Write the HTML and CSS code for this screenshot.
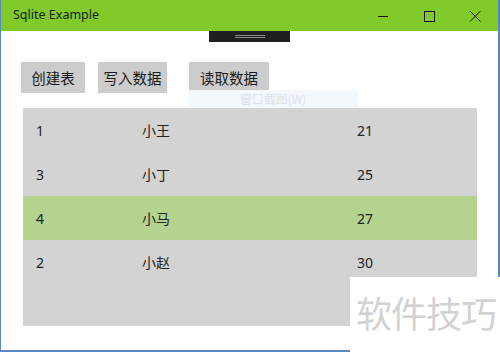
FILE: index.html
```html
<!DOCTYPE html>
<html>
<head>
<meta charset="utf-8">
<link rel="stylesheet" href="styles.css">
</head>
<body>
<div class="window">
  <div class="titlebar">
    <span class="title">Sqlite Example</span>
    <div class="controls">
      <svg class="ctl" width="46" height="31" viewBox="0 0 46 31"><line x1="18" y1="16.5" x2="28" y2="16.5" stroke="#111" stroke-width="1"/></svg>
      <svg class="ctl" width="46" height="31" viewBox="0 0 46 31"><rect x="18.5" y="11.5" width="10" height="10" fill="none" stroke="#111" stroke-width="1"/></svg>
      <svg class="ctl" width="46" height="31" viewBox="0 0 46 31"><path d="M18 11 L28.5 21.5 M28.5 11 L18 21.5" stroke="#111" stroke-width="1"/></svg>
    </div>
  </div>
  <div class="content">
    <div class="grip"><span class="grip-line"></span><span class="grip-line"></span></div>
    <div class="toolbar">
      <button class="btn btn-create">创建表</button>
      <button class="btn btn-write">写入数据</button>
      <button class="btn btn-read">读取数据</button>
    </div>
    <div class="grid">
      <div class="row"><span class="c1">1</span><span class="c2">小王</span><span class="c3">21</span></div>
      <div class="row"><span class="c1">3</span><span class="c2">小丁</span><span class="c3">25</span></div>
      <div class="row selected"><span class="c1">4</span><span class="c2">小马</span><span class="c3">27</span></div>
      <div class="row"><span class="c1">2</span><span class="c2">小赵</span><span class="c3">30</span></div>
    </div>
    <div class="tooltip">窗口截图(W)</div>
  </div>
  <div class="watermark">软件技巧</div>
</div>
</body>
</html>
```
FILE: styles.css
```css
html, body {
  margin: 0;
  padding: 0;
  background: #ffffff;
}
body {
  width: 500px;
  height: 352px;
  overflow: hidden;
  font-family: "Noto Sans", "Noto Sans CJK SC", sans-serif;
}
.window {
  position: relative;
  width: 500px;
  height: 352px;
  box-sizing: border-box;
  border-left: 1px solid #5b87c0;
  border-right: 2px solid #5b87c0;
  border-bottom: 2px solid #5b87c0;
  display: flex;
  flex-direction: column;
  background: #fff;
}
.titlebar {
  height: 31px;
  background: #80cb2a;
  display: flex;
  align-items: center;
  justify-content: space-between;
  flex: none;
}
.title {
  margin-left: 12px;
  font-size: 12.5px;
  color: #1a1a1a;
  padding-bottom: 2px;
}
.controls {
  display: flex;
}
.ctl {
  display: block;
}
.content {
  position: relative;
  flex: 1;
  display: flex;
  flex-direction: column;
}
.grip {
  width: 81px;
  height: 11px;
  background: #1f1f1f;
  margin: 0 auto;
  display: flex;
  flex-direction: column;
  align-items: center;
  justify-content: center;
  gap: 1px;
}
.grip-line {
  display: block;
  width: 30px;
  height: 1px;
  background: #8a8a8a;
}
.toolbar {
  display: flex;
  margin-top: 20px;
  margin-left: 20px;
}
.btn {
  height: 31px;
  border: none;
  background: #cccccc;
  font-family: "Noto Sans CJK SC", "Noto Sans", sans-serif;
  font-size: 14.5px;
  color: #1a1a1a;
  padding: 0;
  line-height: 31px;
}
.btn-create { width: 64px; }
.btn-write { width: 69px; margin-left: 13px; }
.btn-read { width: 80px; margin-left: 22px; }
.grid {
  margin-top: 15px;
  margin-left: 22px;
  width: 454px;
  height: 218px;
  background: #d3d3d3;
  display: flex;
  flex-direction: column;
}
.row {
  height: 44px;
  display: flex;
  align-items: center;
  font-family: "Noto Sans", "Noto Sans CJK SC", sans-serif;
  font-size: 14px;
  color: #222;
}
.row.selected {
  background: #b3d38f;
}
.c1 { width: 106px; margin-left: 13px; }
.c2 { width: 215px; }
.tooltip {
  position: absolute;
  left: 187px;
  top: 59px;
  width: 170px;
  height: 17px;
  background: #f3f8fd;
  color: #dde2e7;
  font-size: 12px;
  line-height: 17px;
  text-align: center;
  font-family: "Noto Sans CJK SC", sans-serif;
}
.watermark {
  position: absolute;
  left: 349px;
  top: 277px;
  width: 151px;
  height: 75px;
  background: #ffffff;
  color: #d2d2d2;
  font-size: 36px;
  line-height: 40px;
  padding-top: 15px;
  padding-left: 6px;
  box-sizing: border-box;
  font-family: "Noto Sans CJK SC", sans-serif;
  letter-spacing: -1px;
  white-space: nowrap;
}
```
